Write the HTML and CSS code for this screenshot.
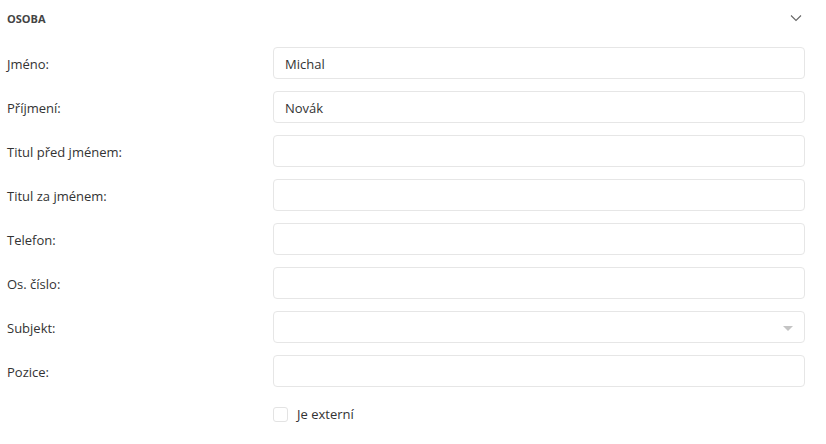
FILE: index.html
```html
<!DOCTYPE html>
<html lang="cs">
<head>
<meta charset="utf-8">
<link rel="stylesheet" href="styles.css">
</head>
<body>
<section class="panel">
  <header class="panel-head">
    <span class="panel-title">OSOBA</span>
    <svg class="chev" width="12" height="8" viewBox="0 0 12 8"><path d="M1 1.5 L6 6.5 L11 1.5" fill="none" stroke="#666" stroke-width="1.1"/></svg>
  </header>
  <div class="form">
    <label class="lbl">Jméno:</label><div class="field">Michal</div>
    <label class="lbl">Příjmení:</label><div class="field">Novák</div>
    <label class="lbl">Titul před jménem:</label><div class="field"></div>
    <label class="lbl">Titul za jménem:</label><div class="field"></div>
    <label class="lbl">Telefon:</label><div class="field"></div>
    <label class="lbl">Os. číslo:</label><div class="field"></div>
    <label class="lbl">Subjekt:</label><div class="field select"><span class="caret"></span></div>
    <label class="lbl">Pozice:</label><div class="field"></div>
    <span></span><div class="check"><span class="box"></span><span>Je externí</span></div>
  </div>
</section>
</body>
</html>
```
FILE: styles.css
```css
html, body { margin: 0; background: #fff; }
body { font-family: "Open Sans", "Noto Sans", sans-serif; font-size: 13px; color: #333; }
.panel { padding: 0 21px 0 7px; }
.panel-head { height: 36px; display: flex; align-items: center; justify-content: space-between; }
.panel-title { font-size: 11px; font-weight: 700; color: #444; }
.chev { margin-right: 3px; }
.form { display: grid; grid-template-columns: 266px 1fr; row-gap: 12px; align-items: center; padding-top: 11px; }
.lbl { height: 32px; line-height: 34px; }
.field { height: 29px; border: 1px solid #e6e6e6; border-radius: 4px; display: flex; align-items: center; padding: 1px 11px 0; position: relative; }
.caret { position: absolute; right: 11px; top: 14px; width: 0; height: 0; border-left: 5px solid transparent; border-right: 5px solid transparent; border-top: 5px solid #c4c4c4; }
.check { display: flex; align-items: center; gap: 9px; height: 32px; margin-top: -1px; }
.box { width: 13px; height: 13px; border: 1px solid #e3e3e3; border-radius: 3px; }
```
